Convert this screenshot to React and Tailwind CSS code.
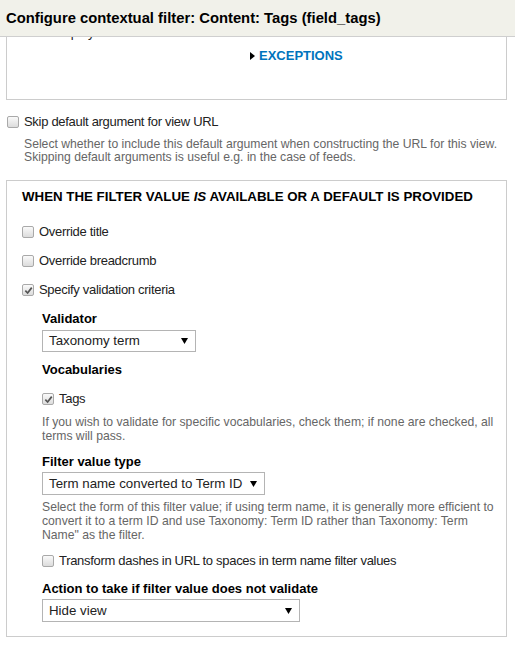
import React from 'react';

function Checkbox({ checked }) {
  return (
    <span className="shrink-0 w-[12px] h-[12px] rounded-[2px] border border-[#a9a9a9] bg-gradient-to-b from-[#fafafa] to-[#dcdcdc] flex items-center justify-center">
      {checked && (
        <svg width="9" height="9" viewBox="0 0 10 10">
          <path d="M1.5 5.2 L4 7.8 L8.6 1.8" fill="none" stroke="#555" strokeWidth="1.9" />
        </svg>
      )}
    </span>
  );
}

function CheckRow({ checked, label, className = '' }) {
  return (
    <label className={`flex items-center gap-[5px] h-[16px] text-[13px] leading-[16px] tracking-[-0.3px] text-[#222] ${className}`}>
      <Checkbox checked={checked} />
      <span>{label}</span>
    </label>
  );
}

function Select({ value, width, className = '' }) {
  return (
    <div
      className={`border border-[#b4b4b4] bg-white flex items-center justify-between pl-[6px] pr-[7px] text-[13.3px] leading-[16px] text-[#222] ${width} ${className}`}
    >
      <span>{value}</span>
      <svg width="7" height="6" viewBox="0 0 7 6">
        <path d="M0 0 H7 L3.5 6 Z" fill="#000" />
      </svg>
    </div>
  );
}

function Desc({ children, className = '' }) {
  return <p className={`text-[12.2px] text-[#666] ${className}`}>{children}</p>;
}

function Label({ children, className = '' }) {
  return <div className={`text-[13px] font-bold text-black leading-[16px] ${className}`}>{children}</div>;
}

export default function App() {
  return (
    <div className="w-[517px] h-[649px] bg-white overflow-hidden flex flex-col" style={{ fontFamily: '"Liberation Sans", Arial, sans-serif' }}>
      <div className="relative z-10 w-[515px] h-[37px] shrink-0 bg-[#f1f1ea] border-b border-[#cfcfcf] flex items-center pl-[6px]">
        <h1 className="text-[14.8px] leading-[18px] font-bold text-black">Configure contextual filter: Content: Tags (field_tags)</h1>
      </div>

      <div className="flex-1 overflow-hidden">
        <div className="mx-[6px] w-[501px] h-[75px] -mt-[12px] border border-t-0 border-[#ccc] flex flex-col">
          <div className="pl-[45px] text-[13px] leading-[16px] text-[#222]">Display all results</div>
          <div className="mt-[7px] pl-[243px] h-[16px] flex items-center gap-[4px]">
            <svg width="5" height="8" viewBox="0 0 5 8">
              <path d="M0 0 L5 4 L0 8 Z" fill="#000" />
            </svg>
            <span className="text-[13px] leading-[16px] font-bold text-[#0074bd]">EXCEPTIONS</span>
          </div>
        </div>

        <div className="mt-[14px] pl-[7px]">
          <CheckRow label="Skip default argument for view URL" />
          <Desc className="pl-[17px] mt-[8px] leading-[13px]">
            Select whether to include this default argument when constructing the URL for this view.
            <br />
            Skipping default arguments is useful e.g. in the case of feeds.
          </Desc>
        </div>

        <div className="mt-[16px] mx-[6px] w-[501px] h-[457px] border border-[#ccc] pl-[15px] pt-[8px]">
          <div className="text-[13.3px] leading-[16px] font-bold text-black uppercase">
            When the filter value <i>is</i> available or a default is provided
          </div>
          <div className="mt-[19px] flex flex-col gap-[13px]">
            <CheckRow label="Override title" />
            <CheckRow label="Override breadcrumb" />
            <CheckRow checked label="Specify validation criteria" />
          </div>

          <div className="pl-[20px] mt-[13px]">
            <Label>Validator</Label>
            <Select value="Taxonomy term" width="w-[154px]" className="mt-[3px] h-[22px]" />

            <Label className="mt-[10px]">Vocabularies</Label>
            <CheckRow checked label="Tags" className="mt-[13px]" />
            <Desc className="mt-[8px] pr-[10px] leading-[14px]">
              If you wish to validate for specific vocabularies, check them; if none are checked, all terms will pass.
            </Desc>

            <Label className="mt-[11px]">Filter value type</Label>
            <Select value="Term name converted to Term ID" width="w-[223px]" className="mt-[2px] h-[23px]" />
            <Desc className="mt-[5px] pr-[10px] leading-[14px]">
              Select the form of this filter value; if using term name, it is generally more efficient to convert it to a term ID and use Taxonomy: Term ID rather than Taxonomy: Term Name" as the filter.
            </Desc>
            <CheckRow label="Transform dashes in URL to spaces in term name filter values" className="mt-[11px]" />

            <Label className="mt-[12px]">Action to take if filter value does not validate</Label>
            <Select value="Hide view" width="w-[258px]" className="mt-[2px] h-[23px]" />
          </div>
        </div>
      </div>
    </div>
  );
}
